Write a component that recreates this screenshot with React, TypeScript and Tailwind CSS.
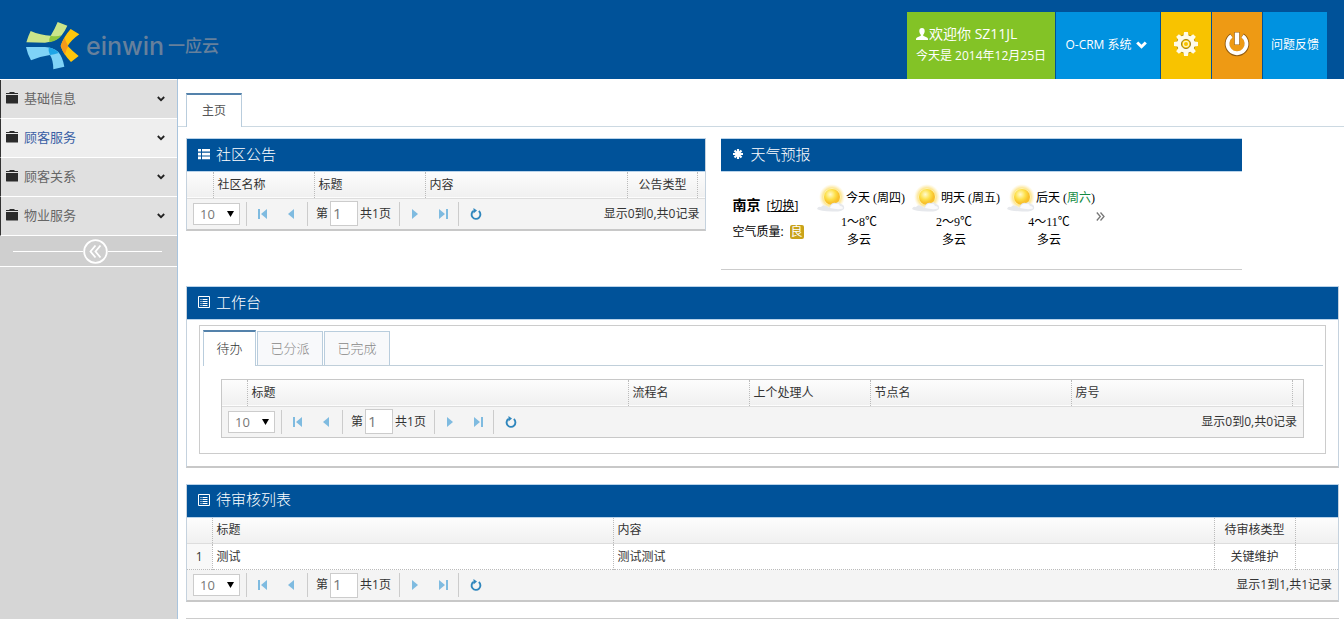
import type { ReactNode } from "react";

interface Column {
  title: string;
  width: string;
  center?: boolean;
}

interface GridProps {
  columns: Column[];
  rows?: string[][];
}

interface PagerProps {
  id: string;
  summary: string;
}

interface PanelProps {
  title: string;
  icon: ReactNode;
  children: ReactNode;
}

const menus = [
  { name: "基础信息", active: false },
  { name: "顾客服务", active: true },
  { name: "顾客关系", active: false },
  { name: "物业服务", active: false },
];

const noticeColumns: Column[] = [
  { title: "", width: "w-[26px]" },
  { title: "社区名称", width: "w-[101px]" },
  { title: "标题", width: "w-[111px]" },
  { title: "内容", width: "w-auto" },
  { title: "公告类型", width: "w-[70px]", center: true },
  { title: "", width: "w-[8px]" },
];

const taskColumns: Column[] = [
  { title: "", width: "w-[25px]" },
  { title: "标题", width: "w-auto" },
  { title: "流程名", width: "w-[121px]" },
  { title: "上个处理人", width: "w-[121px]" },
  { title: "节点名", width: "w-[201px]" },
  { title: "房号", width: "w-[221px]" },
  { title: "", width: "w-[11px]" },
];

const auditColumns: Column[] = [
  { title: "", width: "w-[25px]", center: true },
  { title: "标题", width: "w-[401px]" },
  { title: "内容", width: "w-auto" },
  { title: "待审核类型", width: "w-[81px]", center: true },
  { title: "", width: "w-[43px]" },
];

const auditRows = [["1", "测试", "测试测试", "关键维护", ""]];

const forecast = [
  { day: "今天", week: "周四", temp: "1～8℃", sky: "多云", weekend: false },
  { day: "明天", week: "周五", temp: "2～9℃", sky: "多云", weekend: false },
  { day: "后天", week: "周六", temp: "4～11℃", sky: "多云", weekend: true },
];

const LogoMark = () => (
  <svg className="h-[50px] w-[55px]" viewBox="75 62 165 150" aria-hidden="true">
    <path fill="#cbe58a" d="M92 92Q84 108 79 126L135 127Q168 125 185 105Q195 92 202 76L173 65Q165 85 152 106Q122 105 92 92Z" />
    <path fill="#8fc63f" d="M152 106Q168 110 184 105Q174 121 148 126Q146 115 152 106Z" />
    <path fill="#7fd3f7" d="M78 140Q82 160 93 180Q120 168 150 164Q160 180 160 207L193 199Q188 170 175 155Q160 142 135 140Z" />
    <path fill="#1fa5e6" d="M146 141Q166 146 176 158Q163 162 150 164Q144 152 146 141Z" />
    <path fill="#ffc60b" d="M212 86Q190 110 182 137Q190 162 213 185L236 167Q215 150 203 137Q215 118 238 102Z" />
    <path fill="#f59a1b" d="M193 112Q186 124 182 137Q187 152 195 163Q198 148 205 138Q198 124 193 112Z" />
  </svg>
);

const UserIcon = () => (
  <svg className="h-3 w-3" viewBox="0 0 12 12" fill="#fff" aria-hidden="true">
    <path d="M6 0C4.200 0 3.300 1.300 3.300 3.100c0 1.500.6 2.900 1.500 3.600v1L1 9.400C.3 9.800 0 10.300 0 11v1h12v-1c0-.7-.3-1.200-1-1.600L7.200 7.700v-1C8.100 6 8.700 4.600 8.700 3.100 8.700 1.300 7.800 0 6 0Z" />
  </svg>
);

const gearTeeth = [0, 45, 90, 135, 180, 225, 270, 315];

const GearIcon = () => (
  <svg className="mb-1 h-[26px] w-[26px]" viewBox="0 0 26 26" aria-hidden="true">
    <circle cx="13" cy="13" r="9.200" fill="none" stroke="#8a6d10" strokeWidth="1" />
    <circle cx="13" cy="13" r="6.800" fill="none" stroke="#fffbe8" strokeWidth="4.400" />
    {gearTeeth.map((angle) => (
      <path key={angle} d="M10.300 6L11.100 1h3.800l.8 5Z" fill="#fffbe8" transform={`rotate(${angle} 13 13)`} />
    ))}
    <circle cx="13" cy="13" r="4.600" fill="none" stroke="#8a6d10" strokeWidth="0.800" />
    <circle cx="13" cy="13" r="2.600" fill="none" stroke="#fff3c0" strokeWidth="1.200" />
  </svg>
);

const PowerIcon = () => (
  <svg className="mb-1 h-[26px] w-[26px]" viewBox="0 0 26 26" fill="none" aria-hidden="true">
    <path d="M7.500 4.500a10 10 0 1 0 11 0" stroke="#8f5a10" strokeWidth="4.600" />
    <path d="M13 1v13" stroke="#8f5a10" strokeWidth="5.400" />
    <path d="M7.500 5a9.500 9.500 0 1 0 11 0" stroke="#fff" strokeWidth="3.800" />
    <path d="M13 1.500v12" stroke="#fff" strokeWidth="4.400" />
  </svg>
);

const ChevronIcon = () => (
  <svg className="h-2 w-[11px]" viewBox="0 0 11 8" fill="none" stroke="#fff" strokeWidth="3" aria-hidden="true">
    <path d="M1.200 1.500L5.500 5.700L9.800 1.500" />
  </svg>
);

const FolderIcon = () => (
  <svg className="mb-[2px] h-3 w-3" viewBox="0 0 12 12" fill="#2b2b2b" aria-hidden="true">
    <path d="M0 1h3.200L3.800 0h4.400l.6 1H12v1H0Z" />
    <path d="M0 3h12v8.500H.4L0 11Z" />
  </svg>
);

const AngleIcon = () => (
  <svg className="h-[6px] w-[8px]" viewBox="0 0 8 6" fill="none" stroke="#222" strokeWidth="1.800" aria-hidden="true">
    <path d="M.8 1L4 4.200L7.200 1" />
  </svg>
);

const ThListIcon = () => (
  <svg className="h-3 w-3" viewBox="0 0 12 12" fill="#fff" aria-hidden="true">
    <path d="M0 1h3v2.600H0zM4 1h8v2.600H4zM0 4.800h3v2.600H0zM4 4.800h8v2.600H4zM0 8.600h3v2.600H0zM4 8.600h8v2.600H4z" />
  </svg>
);

const AsteriskIcon = () => (
  <svg className="h-3 w-3" viewBox="0 0 12 12" stroke="#fff" strokeWidth="2.200" aria-hidden="true">
    <path d="M6 1v10M1 6h10M2.500 2.500l7 7M9.500 2.500l-7 7" />
  </svg>
);

const ListAltIcon = () => (
  <svg className="h-3 w-3" viewBox="0 0 12 12" fill="none" stroke="#fff" aria-hidden="true">
    <path d="M.5.500h11v11H.5zM2.500 3.500h1M4.500 3.500h5M2.500 5.500h1M4.500 5.500h5M2.500 7.500h1M4.500 7.500h5M2.500 9.500h1M4.500 9.500h5" />
  </svg>
);

const SunIcon = ({ id }: { id: string }) => (
  <svg className="h-7 w-7" viewBox="0 0 28 28" aria-hidden="true">
    <defs>
      <radialGradient id={`${id}-glow`}>
        <stop offset="0.600" stopColor="#fbd34a" stopOpacity="0.900" />
        <stop offset="1" stopColor="#fde9a0" stopOpacity="0" />
      </radialGradient>
      <radialGradient id={`${id}-disc`} cx="0.400" cy="0.350">
        <stop offset="0" stopColor="#fffbd0" />
        <stop offset="0.600" stopColor="#fde04a" />
        <stop offset="1" stopColor="#f8c02c" />
      </radialGradient>
    </defs>
    <circle cx="15" cy="13" r="13" fill={`url(#${id}-glow)`} />
    <circle cx="15" cy="13" r="8.500" fill={`url(#${id}-disc)`} stroke="#fff3b0" />
    <path fill="#e6e8ec" d="M0 25q1-3 4-2 2-3 5-1 2 0 3 2 2-6 7-5 3-2 5 1 4 1 3 5-2 3-12 2.500Q3 27 0 25Z" />
    <path fill="#fafafc" d="M13 24q2-5 6-4 3-1 4 2 3 0 3 2.500-5 1.500-13-.5Z" />
  </svg>
);

const pagerPaths = {
  first: "M1 1h2v10H1zM10 1v10L4 6z",
  prev: "M9 1v10L3 6z",
  next: "M3 1v10L9 6z",
  last: "M9 1h2v10H9zM2 1v10L8 6z",
};

const PagerButton = ({ label, path }: { label: string; path: string }) => (
  <button type="button" aria-label={label} className="flex h-6 w-7 items-center justify-center">
    <svg className="h-3 w-3" viewBox="0 0 12 12" fill="#7fbbe0" aria-hidden="true">
      <path d={path} />
    </svg>
  </button>
);

const Separator = () => <span className="h-6 w-px bg-[#ccc]" />;

const Pager = ({ id, summary }: PagerProps) => {
  return (
    <div className="flex h-[30px] items-center bg-[#f4f4f4] px-[6px] text-xs text-[#333]">
      <div className="relative mr-[6px]">
        <select aria-label="每页条数" className="block h-[22px] w-[47px] appearance-none border border-[#ccc] bg-white pl-[6px] text-[13px] leading-5 text-[#777]">
          <option>10</option>
        </select>
        <svg className="pointer-events-none absolute top-2 right-[6px] h-[6px] w-[7px]" viewBox="0 0 7 6" aria-hidden="true">
          <path d="M0 0h7L3.500 6z" />
        </svg>
      </div>
      <Separator />
      <div className="flex px-[2px]">
        <PagerButton label="首页" path={pagerPaths.first} />
        <PagerButton label="上一页" path={pagerPaths.prev} />
      </div>
      <Separator />
      <label htmlFor={id} className="ml-2 mr-[2px]">第</label>
      <input id={id} defaultValue="1" className="h-[25px] w-7 border border-[#ccc] bg-white pb-[2px] pl-[2px] text-[15px] text-[#777]" />
      <span className="mr-2 ml-[2px]">共1页</span>
      <Separator />
      <div className="flex px-px">
        <PagerButton label="下一页" path={pagerPaths.next} />
        <PagerButton label="末页" path={pagerPaths.last} />
      </div>
      <Separator />
      <button type="button" aria-label="刷新" className="ml-[3px] flex h-6 w-7 items-center justify-center">
        <svg className="h-3 w-3" viewBox="0 0 12 12" fill="none" aria-hidden="true">
          <path d="M8.800 3.100A4.400 4.400 0 1 1 3.600 2.800" stroke="#2f86bd" strokeWidth="1.900" />
          <path d="M3.500 0l3.500 2.600-3.500 2.800z" fill="#2f86bd" />
        </svg>
      </button>
      <span className="ml-auto">{summary}</span>
    </div>
  );
};

const DataTable = ({ columns, rows = [] }: GridProps) => {
  return (
    <table className="w-full table-fixed border-collapse text-xs text-[#333]">
      <thead>
        <tr className="h-[26px] border-b border-[#ddd] bg-linear-to-b from-[#fdfdfd] to-[#f0f0f0]">
          {columns.map((column, index) => (
            <th
              key={index}
              className={`${column.width} ${column.center ? "text-center" : "pl-1 text-left"} border-r border-dotted border-r-[#bbb] p-0 font-normal whitespace-nowrap last:border-r-0`}
            >
              {column.title}
            </th>
          ))}
        </tr>
      </thead>
      {rows.length > 0 && (
        <tbody>
          {rows.map((row) => (
            <tr key={row[0]} className="h-[26px] border-b border-dotted border-[#bbb]">
              {row.map((cell, index) => (
                <td
                  key={index}
                  className={`${columns[index].center ? "text-center" : "pl-1"} border-r border-dotted border-r-[#bbb] p-0 first:bg-[#f8f8f8] last:border-r-0`}
                >
                  {cell}
                </td>
              ))}
            </tr>
          ))}
        </tbody>
      )}
    </table>
  );
};

const PanelTitle = ({ title, icon }: { title: string; icon: ReactNode }) => (
  <h2 className="flex h-[34px] items-center gap-[6px] border-y border-[#b9d3ea] bg-[#005299] pb-[2px] pl-[11px] text-[15px] font-light text-white">
    {icon}
    {title}
  </h2>
);

const Panel = ({ title, icon, children }: PanelProps) => (
  <section className="border-x border-b-2 border-x-[#c5d2de] border-b-[#c8c8c8]">
    <PanelTitle title={title} icon={icon} />
    {children}
  </section>
);

const Header = () => {
  return (
    <header className="flex items-end bg-[#005299] pt-3 pr-[17px] text-white">
      <a href="#" className="flex h-[67px] items-center pl-[25px] text-[#66809c]">
        <LogoMark />
        <span className="ml-[6px] font-['Inter',sans-serif] text-[25px] leading-8 font-medium">einwin</span>
        <span className="ml-1 text-[17px] leading-8 font-medium">一应云</span>
      </a>
      <div className="ml-auto flex h-[67px] gap-px text-xs">
        <div className="w-[148px] bg-[#83c326] pt-3 pl-[9px] whitespace-nowrap">
          <p className="flex items-center gap-px text-sm leading-5">
            <UserIcon />
            欢迎你 SZ11JL
          </p>
          <p className="leading-6">今天是 2014年12月25日</p>
        </div>
        <button type="button" className="flex w-[104px] items-center justify-center gap-1 bg-[#0092e0] pr-1 pb-[2px]">
          O-CRM 系统
          <ChevronIcon />
        </button>
        <button type="button" aria-label="设置" className="flex w-[50px] items-center justify-center bg-[#f8c300]">
          <GearIcon />
        </button>
        <button type="button" aria-label="退出" className="flex w-[50px] items-center justify-center bg-[#ee9a14]">
          <PowerIcon />
        </button>
        <button type="button" className="w-16 bg-[#0092e0] pb-[2px]">问题反馈</button>
      </div>
    </header>
  );
};

const Sidebar = () => {
  return (
    <aside className="w-[178px] shrink-0 border-r border-[#a9c4dd] bg-[#d6d6d6]">
      <nav className="border-t border-white">
        {menus.map((menu) => (
          <a
            key={menu.name}
            href="#"
            className={`${menu.active ? "bg-[#eee] text-[#3a5fa5]" : "bg-[#e0e0e0] text-[#666]"} flex h-[39px] items-center border-b border-l border-b-white border-l-[#333] pr-3 pb-px pl-[5px] text-[13px]`}
          >
            <FolderIcon />
            <span className="mr-auto ml-[6px]">{menu.name}</span>
            <AngleIcon />
          </a>
        ))}
      </nav>
      <div className="flex h-[31px] items-center border-b border-white bg-[#cfcfcf] pr-[15px] pl-[13px]">
        <span className="h-px flex-1 bg-white" />
        <button type="button" aria-label="收起菜单">
          <svg className="h-[25px] w-[25px]" viewBox="0 0 25 25" fill="none" stroke="#fff" strokeWidth="1.800" aria-hidden="true">
            <circle cx="12.500" cy="12.500" r="11.300" />
            <path d="M12.500 6.500l-5 6 5 6M17.500 6.500l-5 6 5 6" />
          </svg>
        </button>
        <span className="h-px w-[54px] bg-white" />
      </div>
    </aside>
  );
};

const Weather = () => {
  return (
    <section className="flex flex-col border-b border-[#ccc]">
      <PanelTitle title="天气预报" icon={<AsteriskIcon />} />
      <div className="flex pt-3 pb-5 pl-[11px] text-xs text-black">
        <div className="w-[79px] pt-2 whitespace-nowrap">
          <p className="leading-7">
            <b className="mr-[6px] text-sm">南京</b>[<a href="#" className="underline">切换</a>]
          </p>
          <p className="flex items-center leading-6">
            空气质量:
            <span className="ml-[6px] rounded-xs bg-[#c9a31a] px-px leading-[14px] text-white">良</span>
          </p>
        </div>
        {forecast.map((item) => (
          <div key={item.day} className="w-[95px] text-center font-['Liberation_Serif','Noto_Sans_CJK_SC',serif] text-xs">
            <div className="flex items-center justify-center pl-1 leading-7 whitespace-nowrap">
              <SunIcon id={item.temp} />
              <span className="ml-px">
                {item.day} (<span className={item.weekend ? "text-[#118a43]" : ""}>{item.week}</span>)
              </span>
            </div>
            <p className="mt-px leading-[18px]">{item.temp}</p>
            <p className="leading-[18px]">{item.sky}</p>
          </div>
        ))}
        <button type="button" aria-label="更多" className="h-16 w-4">
          <svg className="h-[9px] w-[9px]" viewBox="0 0 9 9" fill="none" stroke="#777" strokeWidth="1.300" aria-hidden="true">
            <path d="M.8.500l3.500 4-3.500 4M4.500.500l3.500 4-3.500 4" />
          </svg>
        </button>
      </div>
    </section>
  );
};

const Workbench = () => {
  return (
    <Panel title="工作台" icon={<ListAltIcon />}>
      <div className="mx-3 mt-[5px] mb-3 border border-[#ccc] pt-1 pr-[2px] pb-[15px] pl-[3px]">
        <div role="tablist" className="flex items-end gap-px border-b border-[#c0cfda] text-[13px]">
          <button role="tab" aria-selected="true" type="button" className="-mb-px h-9 w-[53px] border-x border-t-2 border-x-[#b9cddd] border-t-[#5482ab] bg-white font-light text-[#333]">
            待办
          </button>
          <button role="tab" aria-selected="false" type="button" className="h-[34px] w-[66px] border border-b-0 border-[#b9cddd] bg-[#f8f9fb] font-light text-[#888]">
            已分派
          </button>
          <button role="tab" aria-selected="false" type="button" className="h-[34px] w-[66px] border border-b-0 border-[#b9cddd] bg-[#f8f9fb] font-light text-[#888]">
            已完成
          </button>
        </div>
        <div className="mt-[13px] mr-[19px] ml-[18px] border border-[#c8c8c8]">
          <DataTable columns={taskColumns} />
          <Pager id="task-page" summary="显示0到0,共0记录" />
        </div>
      </div>
    </Panel>
  );
};

const App = () => {
  return (
    <div className="flex min-h-screen flex-col bg-white font-['Open_Sans','Noto_Sans_CJK_SC',sans-serif]">
      <Header />
      <div className="flex flex-1">
        <Sidebar />
        <main className="min-w-0 flex-1">
          <div className="border-b border-[#ccd9e2] pt-[14px] pl-2">
            <button type="button" className="-mb-px block h-[34px] w-14 border-x border-t-2 border-x-[#b9cddd] border-t-[#5482ab] bg-white text-xs text-[#555]">
              主页
            </button>
          </div>
          <div className="flex flex-col gap-4 pt-[11px] pr-[5px] pl-2">
            <div className="grid grid-cols-[520fr_520fr_82fr] items-start gap-[15px]">
              <Panel title="社区公告" icon={<ThListIcon />}>
                <DataTable columns={noticeColumns} />
                <Pager id="notice-page" summary="显示0到0,共0记录" />
              </Panel>
              <Weather />
            </div>
            <Workbench />
            <Panel title="待审核列表" icon={<ListAltIcon />}>
              <DataTable columns={auditColumns} rows={auditRows} />
              <Pager id="audit-page" summary="显示1到1,共1记录" />
            </Panel>
            <div className="border-t border-[#ccc]" />
          </div>
        </main>
      </div>
    </div>
  );
};

export default App;
